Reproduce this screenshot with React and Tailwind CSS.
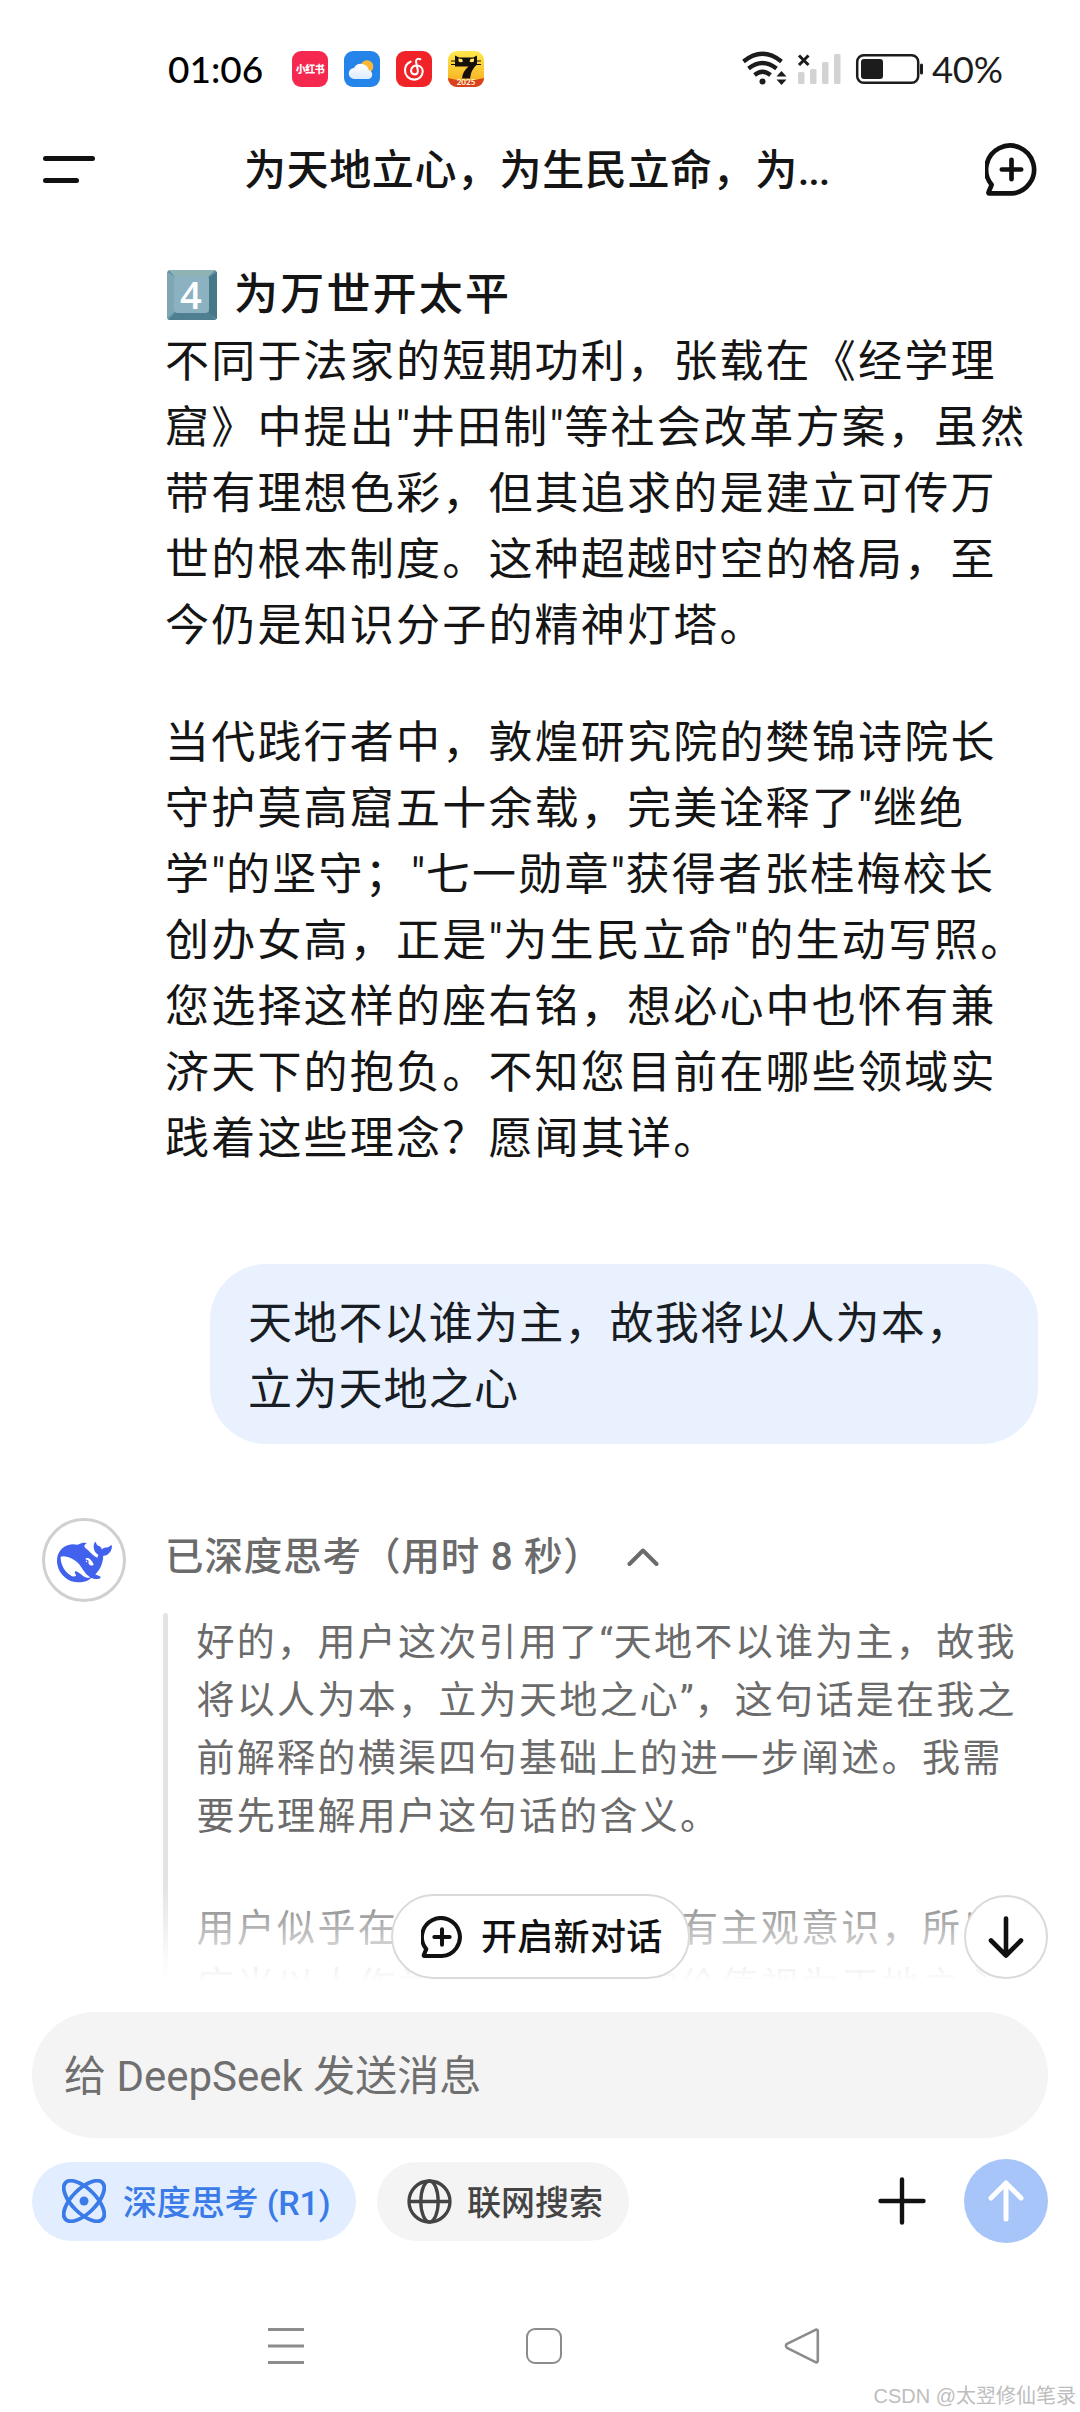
import React from "react";

const answerLines = [
  '不同于法家的短期功利，张载在《经学理',
  '窟》中提出"井田制"等社会改革方案，虽然',
  '带有理想色彩，但其追求的是建立可传万',
  '世的根本制度。这种超越时空的格局，至',
  '今仍是知识分子的精神灯塔。',
];

const followUpLines = [
  '当代践行者中，敦煌研究院的樊锦诗院长',
  '守护莫高窟五十余载，完美诠释了"继绝',
  '学"的坚守；"七一勋章"获得者张桂梅校长',
  '创办女高，正是"为生民立命"的生动写照。',
  '您选择这样的座右铭，想必心中也怀有兼',
  '济天下的抱负。不知您目前在哪些领域实',
  '践着这些理念？愿闻其详。',
];

const thoughtLines = [
  '好的，用户这次引用了“天地不以谁为主，故我',
  '将以人为本，立为天地之心”，这句话是在我之',
  '前解释的横渠四句基础上的进一步阐述。我需',
  '要先理解用户这句话的含义。',
];

const thoughtTail = [
  '用户似乎在强调天地本身没有主观意识，所以',
  '应当以人作为主体，将人的价值视为天地之心',
];

function Lines({ lines, className }) {
  return (
    <div className={className}>
      {lines.map((line) => (
        <p key={line} className="whitespace-nowrap">
          {line.split(/(["“”])/).map((part, i) =>
            i % 2 ? <span key={i} className="tracking-[0.8px]">{part}</span> : part
          )}
        </p>
      ))}
    </div>
  );
}

function ChatPlus({ className, stroke }) {
  return (
    <svg className={className} viewBox="0 0 52 52" fill="none" stroke="currentColor" strokeWidth={stroke} strokeLinecap="round" strokeLinejoin="round">
      <path d="M26 49.5H4.2c-.7 0-1-.6-.7-1.2l3-7.3A23.5 23.5 0 1 1 26 49.5Z" />
      <path d="M26 16.5v19M16.500 26h19" />
    </svg>
  );
}

function StatusBar() {
  return (
    <div className="flex h-[120px] items-start px-[168px] pr-[76px] pt-[49px]">
      <div className="w-[124px] whitespace-nowrap font-['Lato','Noto_Sans_CJK_SC',sans-serif] text-[37px] font-medium leading-[40px] tracking-[0px] text-black">01:06</div>
      <div className="flex gap-4 pt-[2px]">
        <div className="flex size-9 items-center justify-center rounded-[9px] bg-[#f5294f]">
          <span className="whitespace-nowrap font-['Noto_Sans_CJK_SC',sans-serif] text-[10px] font-black leading-none tracking-[-0.5px] text-white">小红书</span>
        </div>
        <svg className="size-9" viewBox="0 0 36 36">
          <defs>
            <linearGradient id="cloud" x1="0" y1="0" x2="0" y2="1"><stop offset="0" stopColor="#fff" /><stop offset="1" stopColor="#dcebfd" /></linearGradient>
          </defs>
          <rect width="36" height="36" rx="9" fill="#2484ea" />
          <circle cx="23" cy="15.500" r="6.300" fill="#fdb833" />
          <path d="M10.500 28a5.500 5.500 0 0 1-.5-11 8 8 0 0 1 14.800 2.200A4.600 4.600 0 0 1 25 28Z" fill="url(#cloud)" />
        </svg>
        <svg className="size-9" viewBox="0 0 36 36" fill="none" stroke="#fff" strokeWidth="2.100" strokeLinecap="round">
          <rect width="36" height="36" rx="9" fill="#ef2328" stroke="none" />
          <path d="M24.300 8.200c-2.600-1.200-4.700.4-4.200 2.900l1.700 8.100c.5 2.600-1 4.200-3.100 4.200-2.300 0-3.800-1.700-3.600-4 .2-3.200 3-5.200 6.300-4.900 3.200.3 5.300 2.900 5.300 6 0 4.600-3.600 8.100-8.400 8.100-5.300 0-9.300-4-9.300-9.200 0-4 2.100-7.200 5.600-8.700" />
        </svg>
        <svg className="size-9" viewBox="0 0 36 36">
          <defs>
            <clipPath id="tile"><rect width="36" height="36" rx="9" /></clipPath>
            <linearGradient id="gold" x1="0" y1="0" x2="0" y2="1"><stop offset="0" stopColor="#ffe94a" /><stop offset="1" stopColor="#f6a91e" /></linearGradient>
          </defs>
          <g clipPath="url(#tile)">
            <rect width="36" height="36" fill="url(#gold)" />
            <path d="M0 27q18 5 36 0v9H0Z" fill="#d9401f" />
            <path d="M7 4.500l4 2h14l4-2v9q-6 5-7 14h-8q.5-7 6.500-12H7Z" fill="#15100a" />
            <path d="M3 10h5M3 13.500h5M28 10h5M28 13.500h5" stroke="#15100a" strokeWidth="1" />
            <path d="M10.500 7.500v3q2.500 1.500 4.500 0l-1-2.500ZM26 7.500v3q-2.500 1.500-4.500 0l1-2.500Z" fill="#ffe36a" />
            <text x="18" y="34" textAnchor="middle" fontFamily="Lato" fontSize="8" fontWeight="900" fill="#fff3d0">2025</text>
          </g>
        </svg>
      </div>
      <div className="ml-auto flex items-start">
        <svg className="h-10 w-[188px] text-[#1c1c1c]" viewBox="738 49 188 40" fill="none" stroke="currentColor">
          <path d="M743.500 61.500q19-15.500 38 0M748.500 68.500q14-11 28 0M754.500 75q8-6.500 16 0" strokeWidth="4.200" />
          <circle cx="762.500" cy="81.500" r="3" fill="currentColor" stroke="none" />
          <path d="M781.500 71l5 5.500h-10ZM781.500 85l5-5.500h-10Z" fill="currentColor" stroke="none" />
          <path d="M799 55.500l9.500 9.500M808.500 55.500l-9.500 9.500" strokeWidth="3" />
          <g fill="#d3d3d3" stroke="none">
            <rect x="798" y="72" width="6.500" height="12" rx="1.500" />
            <rect x="810" y="69" width="6.500" height="15" rx="1.500" />
            <rect x="822" y="62" width="6.500" height="22" rx="1.500" />
            <rect x="834" y="54" width="6.500" height="30" rx="1.500" />
          </g>
          <rect x="857.200" y="55.200" width="61" height="27.500" rx="6.500" strokeWidth="2.500" />
          <rect x="861" y="59" width="22" height="20" rx="3" fill="currentColor" stroke="none" />
          <rect x="920" y="63.500" width="3" height="11" rx="1.500" fill="currentColor" stroke="none" />
        </svg>
        <span className="w-[78px] whitespace-nowrap pl-[6px] font-['Lato',sans-serif] text-[36.5px] leading-10 tracking-[-0.3px] text-[#1c1c1c]">40%</span>
      </div>
    </div>
  );
}

function Header() {
  return (
    <header className="flex h-[98px] items-center pl-[43px] pr-[42px]">
      <div className="flex w-[201px] flex-col gap-[17px]">
        <span className="h-[5px] w-[52px] rounded-full bg-[#111]" />
        <span className="h-[5px] w-9 rounded-full bg-[#111]" />
      </div>
      <h1 className="flex-1 whitespace-nowrap pt-[4px] text-[42px] font-medium leading-[60px] tracking-[0.6px] text-[#151515]">
        为天地立心，为生民立命，为<span className="tracking-[-1.2px]">...</span>
      </h1>
      <ChatPlus className="size-[53px] text-[#111]" stroke={4.600} />
    </header>
  );
}

function Keycap() {
  return (
    <svg className="size-[50px] shrink-0" viewBox="0 0 50 50">
      <rect width="50" height="50" rx="3.500" fill="#5f94a6" />
      <path d="M2 0h46l-7 7H8Z" fill="#8fb3b5" />
      <path d="M0 2l8 5v34l-8 8Z" fill="#7fa6b3" />
      <path d="M50 2l-8 5v36l8 6Z" fill="#457889" />
      <path d="M1 50l8-8h33l7 8Z" fill="#4f8092" />
      <rect x="7" y="6" width="35" height="37" rx="4" fill="#8cb1c0" />
      <text x="25" y="39" textAnchor="middle" fontFamily="Open Sans, sans-serif" fontSize="38" fontWeight="600" fill="#fff">4</text>
    </svg>
  );
}

function Avatar() {
  return (
    <div className="flex size-[84px] shrink-0 items-center justify-center rounded-full border-[3px] border-[#d0d0d0] bg-white">
      <svg className="mt-1 size-[55px]" viewBox="0 0 24 24" fill="#4262ee">
        <path d="M23.748 4.482c-.254-.124-.364.113-.512.234-.051.039-.094.09-.137.136-.372.397-.806.657-1.373.626-.829-.046-1.537.214-2.163.848-.133-.782-.575-1.248-1.247-1.548-.352-.156-.708-.311-.955-.65-.172-.241-.219-.51-.305-.774-.055-.16-.11-.323-.293-.35-.2-.031-.278.136-.356.276-.313.572-.434 1.202-.422 1.84.027 1.436.633 2.58 1.838 3.393.137.093.172.187.129.323-.082.28-.18.552-.266.833-.055.179-.137.217-.329.14a5.526 5.526 0 01-1.736-1.18c-.857-.828-1.631-1.742-2.597-2.458a11.365 11.365 0 00-.689-.471c-.985-.957.13-1.743.388-1.836.27-.098.093-.432-.779-.428-.872.004-1.67.295-2.687.684a3.055 3.055 0 01-.465.137 9.597 9.597 0 00-2.883-.102c-1.885.21-3.39 1.102-4.497 2.623C.082 8.606-.231 10.684.152 12.85c.403 2.284 1.569 4.175 3.36 5.653 1.858 1.533 3.997 2.284 6.438 2.14 1.482-.085 3.133-.284 4.994-1.86.47.234.962.327 1.78.397.63.059 1.236-.03 1.705-.128.735-.156.684-.837.419-.961-2.155-1.004-1.682-.595-2.113-.926 1.096-1.296 2.746-2.642 3.392-7.003.05-.347.007-.565 0-.845-.004-.17.035-.237.23-.256a4.173 4.173 0 001.545-.475c1.396-.763 1.96-2.015 2.093-3.517.02-.23-.004-.467-.247-.588zM11.581 18c-2.089-1.642-3.102-2.183-3.52-2.16-.392.024-.321.471-.235.763.09.288.207.486.371.739.114.167.192.416-.113.603-.673.416-1.842-.14-1.897-.167-1.361-.802-2.5-1.86-3.301-3.307-.774-1.393-1.224-2.887-1.298-4.482-.02-.386.093-.522.477-.592a4.696 4.696 0 011.529-.039c2.132.312 3.946 1.265 5.468 2.774.868.86 1.525 1.887 2.202 2.891.72 1.066 1.494 2.082 2.48 2.914.348.292.625.514.891.677-.802.09-2.14.11-3.054-.614zm1-6.44a.306.306 0 01.415-.287.302.302 0 01.2.288.306.306 0 01-.31.307.303.303 0 01-.304-.308zm3.11 1.596c-.2.081-.399.151-.59.16a1.245 1.245 0 01-.798-.254c-.274-.23-.47-.358-.552-.758a1.73 1.73 0 01.016-.588c.07-.327-.008-.537-.239-.727-.187-.156-.426-.199-.688-.199a.559.559 0 01-.254-.078c-.11-.054-.2-.19-.114-.358.028-.054.16-.186.192-.21.356-.202.767-.136 1.146.016.352.144.618.408 1.001.782.391.451.462.576.685.914.176.265.336.537.445.848.067.195-.019.354-.25.452z" />
      </svg>
    </div>
  );
}

function Conversation() {
  return (
    <main className="relative h-[1794px] overflow-hidden">
      <section className="pl-[165px] pt-[43px] text-[44px] leading-[66px] tracking-[2.2px] text-[#151515]">
        <h2 className="flex h-[68px] items-center gap-[17px] pl-[2px] font-medium">
          <Keycap />
          <span className="whitespace-nowrap">为万世开太平</span>
        </h2>
        <Lines lines={answerLines} />
        <Lines lines={followUpLines} className="mt-[51px]" />
      </section>

      <div className="ml-[210px] mt-[92px] h-[180px] w-[828px] rounded-[56px] bg-[#eaf1fe] pl-[38px] pt-[27px] text-[44px] leading-[66px] tracking-[1.2px] text-[#191d24]">
        <Lines lines={['天地不以谁为主，故我将以人为本，', '立为天地之心']} />
      </div>

      <section className="mt-[74px] flex pl-[42px]">
        <Avatar />
        <div className="ml-[37px] flex-1">
          <div className="flex h-[78px] items-center gap-[24px] pl-[2px] text-[#6b6b6b]">
            <span className="whitespace-nowrap text-[38.5px] font-medium leading-[58px] tracking-[0.9px]">已深度思考（用时 8 秒）</span>
            <svg className="h-5 w-8" viewBox="0 0 32 20" fill="none" stroke="currentColor" strokeWidth="4" strokeLinecap="round" strokeLinejoin="round">
              <path d="M2.500 17L16 3.500 29.500 17" />
            </svg>
          </div>
          <div className="mt-[17px] flex h-[420px] gap-[29px] text-[38px] leading-[58px] tracking-[2.3px] text-[#6b6b6b]">
            <div className="w-[4.500px] shrink-0 rounded-full bg-[#e3e3e3]" />
            <div>
              <Lines lines={thoughtLines} />
              <Lines lines={thoughtTail} className="mt-[54px]" />
            </div>
          </div>
        </div>
      </section>

      <div className="absolute inset-x-0 bottom-0 h-[130px] bg-linear-to-b from-white/0 via-white/85 via-60% to-white to-76%" />
      <button className="absolute bottom-[33px] left-[391px] flex h-[85px] w-[299px] items-center gap-[18px] rounded-full border-[2.500px] border-[#dadada] bg-white pl-[28px] text-[#111]">
        <ChatPlus className="size-[42px] shrink-0" stroke={5} />
        <span className="whitespace-nowrap pt-[3px] text-[36px] font-medium leading-[54px] tracking-[0.3px]">开启新对话</span>
      </button>
      <button className="absolute bottom-[33px] left-[964px] flex size-[84px] items-center justify-center rounded-full border-[2.500px] border-[#dadada] bg-white text-[#111]">
        <svg className="h-[42px] w-9" viewBox="0 0 36 42" fill="none" stroke="currentColor" strokeWidth="4.600" strokeLinecap="round" strokeLinejoin="round">
          <path d="M18 2.500v37M3 24.500l15 15 15-15" />
        </svg>
      </button>
    </main>
  );
}

function Composer() {
  return (
    <footer className="px-8">
      <div className="flex h-[126px] items-center rounded-full bg-[#f4f4f4] pl-[32px]">
        <span className="whitespace-nowrap pt-[4px] text-[42px] leading-[60px] text-[#6f6f6f]">给 DeepSeek 发送消息</span>
      </div>
      <div className="mt-[21px] flex h-[84px] items-center">
        <button className="flex h-[79px] w-[324px] items-center gap-[17px] rounded-full bg-[#e2eeff] pl-[30px] text-[#3a7be8]">
          <svg className="size-11 shrink-0" viewBox="0 0 44 44" fill="none" stroke="currentColor" strokeWidth="3.800">
            <ellipse cx="22" cy="22" rx="26" ry="12" transform="rotate(45 22 22)" />
            <ellipse cx="22" cy="22" rx="26" ry="12" transform="rotate(-45 22 22)" />
            <circle cx="22" cy="22" r="4.500" fill="currentColor" stroke="none" />
          </svg>
          <span className="whitespace-nowrap pt-[3px] text-[34px] font-medium leading-[50px] tracking-[-0.15px]">深度思考 (R1)</span>
        </button>
        <button className="ml-[21px] flex h-[79px] w-[252px] items-center gap-[15px] rounded-full bg-[#f4f4f4] pl-[30px] text-[#444]">
          <svg className="size-[45px] shrink-0" viewBox="0 0 45 45" fill="none" stroke="currentColor" strokeWidth="3.300">
            <circle cx="22.500" cy="22.500" r="20.500" />
            <ellipse cx="22.500" cy="22.500" rx="8.700" ry="20.500" />
            <path d="M2 22.500h41" />
          </svg>
          <span className="whitespace-nowrap pt-[3px] text-[34px] font-medium leading-[50px]">联网搜索</span>
        </button>
        <svg className="ml-auto size-12" viewBox="0 0 48 48" fill="none" stroke="#111" strokeWidth="4.400" strokeLinecap="round">
          <path d="M24 2.500v43M2.500 24h43" />
        </svg>
        <button className="ml-[38px] flex size-[84px] items-center justify-center rounded-full bg-[#a7c5f9]">
          <svg className="h-[42px] w-9" viewBox="0 0 36 42" fill="none" stroke="#fff" strokeWidth="5" strokeLinecap="round" strokeLinejoin="round">
            <path d="M18 39V3M3 18L18 3l15 15" />
          </svg>
        </button>
      </div>
    </footer>
  );
}

function NavBar() {
  return (
    <nav className="relative flex flex-1 items-start pl-[268px] pt-[85px] text-[#8c8c8c]">
      <svg className="h-9 w-9" viewBox="0 0 36 36" stroke="currentColor" strokeWidth="2.800"><path d="M0 1.500h36M0 18h36M0 34.500h36" /></svg>
      <div className="ml-[222px] size-9 rounded-[9px] border-[2.500px] border-[#8c8c8c]" />
      <svg className="ml-[222px] h-9 w-9" viewBox="0 0 36 36" fill="none" stroke="currentColor" strokeWidth="2.600" strokeLinejoin="round">
        <path d="M31.500 1.800L3 15.800q-2.200 2 0 4L31.500 34.200q2.300.6 2.300-1.600V3.400q0-2.200-2.300-1.600Z" />
      </svg>
      <span className="absolute bottom-[1px] right-[4px] whitespace-nowrap font-['Liberation_Sans','Noto_Sans_CJK_SC',sans-serif] text-[20px] leading-[30px] text-[#bdbdbd]">CSDN @太翌修仙笔录</span>
    </nav>
  );
}

export default function App() {
  return (
    <div lang="zh-CN" className="flex h-[2412px] w-[1080px] flex-col overflow-hidden bg-white font-['Roboto','Noto_Sans_CJK_SC',sans-serif]">
      <StatusBar />
      <Header />
      <Conversation />
      <Composer />
      <NavBar />
    </div>
  );
}
